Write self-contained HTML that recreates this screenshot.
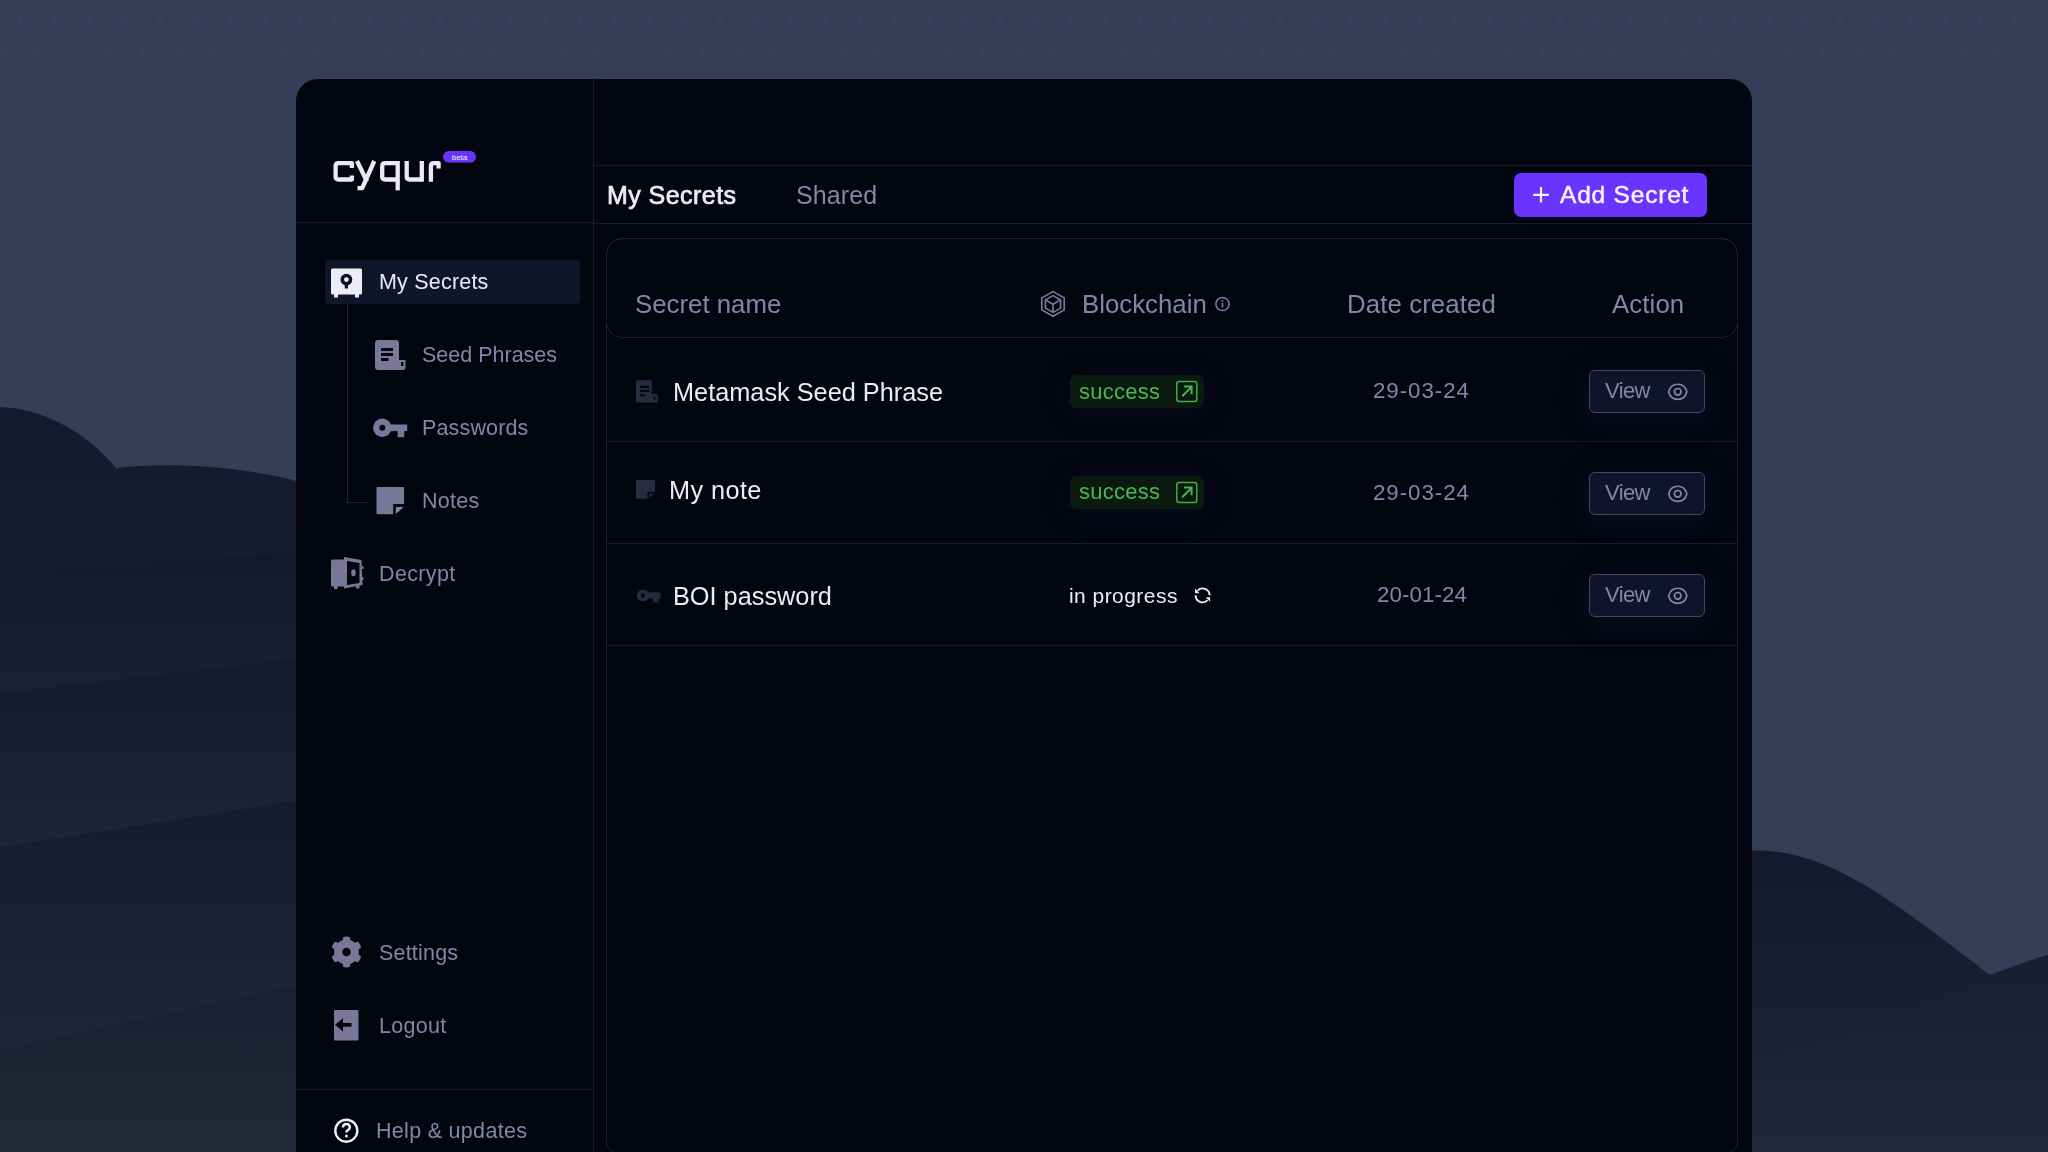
<!DOCTYPE html>
<html><head><meta charset="utf-8">
<style>
*{margin:0;padding:0;box-sizing:border-box}
html,body{width:2048px;height:1152px;overflow:hidden}
body{position:relative;background:#353e56;font-family:"Liberation Sans",sans-serif}
.abs{position:absolute}
.t{position:absolute;white-space:nowrap;line-height:1;will-change:transform}
#panel{position:absolute;left:296px;top:79px;width:1456px;height:1100px;background:#03060f;border-radius:22px 22px 0 0}
.hl{position:absolute;height:1px;background:#171b2e}
.vl{position:absolute;width:1px;background:#171b2e}
.lav{color:#8685a7}
.wh{color:#ecebf7}
</style></head>
<body>
<svg class="abs" style="left:0;top:0" width="2048" height="1152" viewBox="0 0 2048 1152">
  <defs>
    <pattern id="dots" x="0" y="0" width="35" height="67" patternUnits="userSpaceOnUse">
      <circle cx="20" cy="19" r="3" fill="#3e3f68"/>
      <circle cx="37.5" cy="52.5" r="3" fill="#3e3f68"/>
      <circle cx="2.5" cy="52.5" r="3" fill="#3e3f68"/>
    </pattern>
    <linearGradient id="dotfade" x1="0" y1="0" x2="0" y2="1">
      <stop offset="0" stop-color="#fff" stop-opacity="0.75"/>
      <stop offset="0.3" stop-color="#fff" stop-opacity="0.45"/>
      <stop offset="0.65" stop-color="#fff" stop-opacity="0.2"/>
      <stop offset="1" stop-color="#fff" stop-opacity="0"/>
    </linearGradient>
    <mask id="dm"><rect x="0" y="0" width="2048" height="240" fill="url(#dotfade)"/></mask>
    <linearGradient id="gA" gradientUnits="userSpaceOnUse" x1="0" y1="407" x2="0" y2="574">
      <stop offset="0" stop-color="#121a2d"/><stop offset="1" stop-color="#161d30"/>
    </linearGradient>
    <linearGradient id="gB" gradientUnits="userSpaceOnUse" x1="0" y1="555" x2="0" y2="693">
      <stop offset="0" stop-color="#131a2d"/><stop offset="1" stop-color="#1a2133"/>
    </linearGradient>
    <linearGradient id="gC" gradientUnits="userSpaceOnUse" x1="0" y1="660" x2="0" y2="847">
      <stop offset="0" stop-color="#141b2d"/><stop offset="1" stop-color="#1e2536"/>
    </linearGradient>
    <linearGradient id="gD" gradientUnits="userSpaceOnUse" x1="0" y1="800" x2="0" y2="1050">
      <stop offset="0" stop-color="#151c2e"/><stop offset="1" stop-color="#1f2637"/>
    </linearGradient>
    <linearGradient id="gE" gradientUnits="userSpaceOnUse" x1="0" y1="985" x2="0" y2="1152">
      <stop offset="0" stop-color="#192031"/><stop offset="1" stop-color="#222938"/>
    </linearGradient>
    <linearGradient id="gR1" gradientUnits="userSpaceOnUse" x1="0" y1="851" x2="0" y2="1064">
      <stop offset="0" stop-color="#131a2d"/><stop offset="1" stop-color="#1b2234"/>
    </linearGradient>
    <linearGradient id="gR2" gradientUnits="userSpaceOnUse" x1="0" y1="960" x2="0" y2="1152">
      <stop offset="0" stop-color="#181f31"/><stop offset="1" stop-color="#21283a"/>
    </linearGradient>
  </defs>
  <rect x="0" y="0" width="2048" height="240" fill="url(#dots)" mask="url(#dm)"/>
  <!-- left hills -->
  <path d="M0 407 C40 408 85 430 116 468 C170 462 240 466 300 482 L300 1152 L0 1152 Z" fill="url(#gA)"/>
  <path d="M0 574 C100 566 200 558 300 553 L300 1152 L0 1152Z" fill="url(#gB)"/>
  <path d="M0 693 C100 682 200 670 300 659 L300 1152 L0 1152Z" fill="url(#gC)"/>
  <path d="M0 847 C100 832 200 816 300 800 L300 1152 L0 1152Z" fill="url(#gD)"/>
  <path d="M0 1050 C100 1028 200 1006 300 985 L300 1152 L0 1152Z" fill="url(#gE)"/>
  <!-- right hills -->
  <path d="M1740 851 C1800 846 1850 872 1910 915 C1945 940 1970 960 1990 975 C2010 968 2030 960 2048 955 L2048 1152 L1740 1152Z" fill="url(#gR1)"/>
  <path d="M1740 1064 C1830 1040 1920 1010 1990 975 C2010 968 2030 960 2048 955 L2048 1152 L1740 1152Z" fill="url(#gR2)"/>
</svg>
<div id="panel"></div>
<!-- structure lines -->
<div class="vl" style="left:593px;top:79px;height:1073px"></div>
<div class="hl" style="left:296px;top:222px;width:297px"></div>
<div class="hl" style="left:594px;top:165px;width:1158px"></div>
<div class="hl" style="left:594px;top:223px;width:1158px"></div>
<div class="hl" style="left:296px;top:1089px;width:297px"></div>

<!-- logo -->
<svg class="abs" style="left:0;top:0" width="600" height="230" viewBox="0 0 600 230">
 <g fill="none" stroke="#eceaf6" stroke-width="4.3" stroke-linejoin="round">
  <path d="M351.9 168 L351.9 163.2 L338.6 163.2 Q335.6 163.2 335.6 166.2 L335.6 176.5 Q335.6 179.5 338.6 179.5 L351.9 179.5 L351.9 175.6"/>
  <path d="M357 161 L367 181.5"/>
  <path d="M374.3 161 L362.2 188.1 L357.5 188.1"/>
  <path d="M397.7 161 L397.7 190.4"/>
  <path d="M397.7 163.2 L385.2 163.2 Q382.2 163.2 382.2 166.2 L382.2 176.5 Q382.2 179.5 385.2 179.5 L397.7 179.5"/>
  <path d="M406.7 161 L406.7 176.5 Q406.7 179.5 409.7 179.5 L421.8 179.5"/>
  <path d="M421.8 161 L421.8 181.7"/>
  <path d="M430.9 181.7 L430.9 166.2 Q430.9 163.2 433.9 163.2 L438.6 163.2 L438.6 168.5"/>
 </g>
 <rect x="443" y="151" width="33" height="11.6" rx="5.8" fill="#6934fe"/>
 <text x="459.5" y="159.8" text-anchor="middle" font-family="Liberation Sans" font-size="8" fill="#f2eefe">beta</text>
</svg>
<!-- nav active -->
<div class="abs" style="left:325px;top:260px;width:255px;height:44px;background:#10162a;border-radius:4px"></div>
<svg class="abs" style="left:325px;top:262px" width="45" height="40" viewBox="0 0 45 40">
  <rect x="6" y="6.5" width="31" height="26" rx="1.5" fill="#eeedf7"/>
  <rect x="9" y="31" width="4" height="4.5" fill="#eeedf7"/>
  <rect x="30" y="31" width="4" height="4.5" fill="#eeedf7"/>
  <circle cx="21.4" cy="17.6" r="5.9" fill="#0b1022"/>
  <circle cx="21.4" cy="17.6" r="2.4" fill="#eeedf7"/>
  <rect x="19.8" y="20" width="3.2" height="6.5" fill="#0b1022"/>
</svg>

<!-- tree line -->
<div class="abs" style="left:347px;top:304px;width:1px;height:198px;background:#1e2238"></div>
<div class="abs" style="left:347px;top:502px;width:20px;height:1px;background:#1e2238"></div>

<!-- seed phrases -->
<svg class="abs" style="left:370px;top:335px" width="40" height="40" viewBox="0 0 40 40">
  <path d="M8 5 L26 5 Q29 5 29 8 L29 25 L35.5 25 L35.5 32 Q35.5 35 32.5 35 L8 35 Q5 35 5 32 L5 8 Q5 5 8 5Z" fill="#7a7799"/>
  <rect x="11" y="13" width="12" height="3" fill="#03060f"/>
  <rect x="11" y="18" width="12" height="3" fill="#03060f"/>
  <rect x="11" y="23" width="7.5" height="3" fill="#03060f"/>
  <rect x="31" y="27" width="2.5" height="4" fill="#03060f"/>
</svg>

<!-- passwords -->
<svg class="abs" style="left:370px;top:408px" width="40" height="40" viewBox="0 0 40 40">
  <circle cx="12.3" cy="19.7" r="9.2" fill="#7a7799"/>
  <circle cx="12.3" cy="19.7" r="3" fill="#03060f"/>
  <rect x="18" y="16.5" width="19.2" height="6.6" fill="#7a7799"/>
  <rect x="27.6" y="20" width="6.6" height="9.2" fill="#7a7799"/>
</svg>

<!-- notes -->
<svg class="abs" style="left:370px;top:482px" width="40" height="40" viewBox="0 0 40 40">
  <path d="M6.5 6 Q6.5 4.9 7.6 4.9 L33 4.9 Q34.1 4.9 34.1 6 L34.1 22 L23.2 22 L23.2 32.2 L7.6 32.2 Q6.5 32.2 6.5 31.1 Z" fill="#7a7799"/>
  <path d="M25.8 25.1 L33.6 25.1 L25.8 32.1Z" fill="#84859f"/>
</svg>
<!-- decrypt -->
<svg class="abs" style="left:326px;top:553px" width="42" height="40" viewBox="0 0 42 40">
  <rect x="5" y="6.5" width="14" height="27" rx="1.5" fill="#7a7799"/>
  <rect x="8" y="33" width="3.5" height="3" fill="#7a7799"/>
  <rect x="30" y="32" width="3.5" height="3.5" fill="#7a7799"/>
  <path d="M18 4 L35.5 7 L36.5 32 L18 35.5Z" fill="#7a7799"/>
  <path d="M21 8 L33.5 10 L33.5 30 L21 32Z" fill="#03060f"/>
  <ellipse cx="27.5" cy="19.7" rx="2.3" ry="3.5" fill="#7a7799"/>
  <rect x="36" y="13" width="1.5" height="3" fill="#7a7799"/>
  <rect x="36" y="24" width="1.5" height="3" fill="#7a7799"/>
</svg>

<!-- settings -->
<svg class="abs" style="left:326px;top:932px" width="42" height="42" viewBox="0 0 42 42">
  <path fill="#7a7799" d="M32.90 20.00 L32.90 20.22 L32.89 20.43 L32.88 20.65 L32.87 20.86 L32.85 21.08 L32.83 21.30 L32.81 21.51 L32.78 21.73 L32.75 21.94 L32.71 22.15 L32.69 22.37 L32.82 22.62 L33.10 22.91 L33.49 23.24 L33.93 23.60 L34.35 23.97 L34.72 24.35 L34.96 24.70 L35.04 25.01 L34.97 25.27 L34.88 25.52 L34.78 25.77 L34.68 26.02 L34.57 26.26 L34.46 26.51 L34.34 26.75 L34.22 26.99 L34.10 27.23 L33.97 27.47 L33.84 27.70 L33.70 27.93 L33.56 28.16 L33.42 28.39 L33.27 28.61 L33.11 28.83 L32.96 29.05 L32.80 29.27 L32.64 29.48 L32.47 29.69 L32.30 29.90 L32.11 30.09 L31.80 30.17 L31.37 30.14 L30.87 30.01 L30.33 29.83 L29.80 29.63 L29.32 29.46 L28.93 29.36 L28.65 29.37 L28.47 29.50 L28.30 29.64 L28.13 29.77 L27.96 29.90 L27.79 30.03 L27.61 30.16 L27.43 30.28 L27.25 30.40 L27.07 30.52 L26.89 30.63 L26.70 30.74 L26.51 30.85 L26.32 30.95 L26.13 31.05 L25.94 31.15 L25.74 31.24 L25.54 31.33 L25.35 31.41 L25.15 31.50 L24.94 31.58 L24.74 31.65 L24.54 31.74 L24.39 31.98 L24.28 32.37 L24.19 32.87 L24.10 33.43 L23.99 33.99 L23.84 34.48 L23.66 34.87 L23.43 35.10 L23.17 35.17 L22.91 35.21 L22.64 35.25 L22.38 35.29 L22.11 35.32 L21.84 35.34 L21.57 35.36 L21.31 35.38 L21.04 35.39 L20.77 35.40 L20.50 35.40 L20.23 35.40 L19.96 35.39 L19.69 35.38 L19.43 35.36 L19.16 35.34 L18.89 35.32 L18.62 35.29 L18.36 35.25 L18.09 35.21 L17.83 35.17 L17.57 35.10 L17.34 34.87 L17.16 34.48 L17.01 33.99 L16.90 33.43 L16.81 32.87 L16.72 32.37 L16.61 31.98 L16.46 31.74 L16.26 31.65 L16.06 31.58 L15.85 31.50 L15.65 31.41 L15.46 31.33 L15.26 31.24 L15.06 31.15 L14.87 31.05 L14.68 30.95 L14.49 30.85 L14.30 30.74 L14.11 30.63 L13.93 30.52 L13.75 30.40 L13.57 30.28 L13.39 30.16 L13.21 30.03 L13.04 29.90 L12.87 29.77 L12.70 29.64 L12.53 29.50 L12.35 29.37 L12.07 29.36 L11.68 29.46 L11.20 29.63 L10.67 29.83 L10.13 30.01 L9.63 30.14 L9.20 30.17 L8.89 30.09 L8.70 29.90 L8.53 29.69 L8.36 29.48 L8.20 29.27 L8.04 29.05 L7.89 28.83 L7.73 28.61 L7.58 28.39 L7.44 28.16 L7.30 27.93 L7.16 27.70 L7.03 27.47 L6.90 27.23 L6.78 26.99 L6.66 26.75 L6.54 26.51 L6.43 26.26 L6.32 26.02 L6.22 25.77 L6.12 25.52 L6.03 25.27 L5.96 25.01 L6.04 24.70 L6.28 24.35 L6.65 23.97 L7.07 23.60 L7.51 23.24 L7.90 22.91 L8.18 22.62 L8.31 22.37 L8.29 22.15 L8.25 21.94 L8.22 21.73 L8.19 21.51 L8.17 21.30 L8.15 21.08 L8.13 20.86 L8.12 20.65 L8.11 20.43 L8.10 20.22 L8.10 20.00 L8.10 19.78 L8.11 19.57 L8.12 19.35 L8.13 19.14 L8.15 18.92 L8.17 18.70 L8.19 18.49 L8.22 18.27 L8.25 18.06 L8.29 17.85 L8.31 17.63 L8.18 17.38 L7.90 17.09 L7.51 16.76 L7.07 16.40 L6.65 16.03 L6.28 15.65 L6.04 15.30 L5.96 14.99 L6.03 14.73 L6.12 14.48 L6.22 14.23 L6.32 13.98 L6.43 13.74 L6.54 13.49 L6.66 13.25 L6.78 13.01 L6.90 12.77 L7.03 12.53 L7.16 12.30 L7.30 12.07 L7.44 11.84 L7.58 11.61 L7.73 11.39 L7.89 11.17 L8.04 10.95 L8.20 10.73 L8.36 10.52 L8.53 10.31 L8.70 10.10 L8.89 9.91 L9.20 9.83 L9.63 9.86 L10.13 9.99 L10.67 10.17 L11.20 10.37 L11.68 10.54 L12.07 10.64 L12.35 10.63 L12.53 10.50 L12.70 10.36 L12.87 10.23 L13.04 10.10 L13.21 9.97 L13.39 9.84 L13.57 9.72 L13.75 9.60 L13.93 9.48 L14.11 9.37 L14.30 9.26 L14.49 9.15 L14.68 9.05 L14.87 8.95 L15.06 8.85 L15.26 8.76 L15.46 8.67 L15.65 8.59 L15.85 8.50 L16.06 8.42 L16.26 8.35 L16.46 8.26 L16.61 8.02 L16.72 7.63 L16.81 7.13 L16.90 6.57 L17.01 6.01 L17.16 5.52 L17.34 5.13 L17.57 4.90 L17.83 4.83 L18.09 4.79 L18.36 4.75 L18.62 4.71 L18.89 4.68 L19.16 4.66 L19.43 4.64 L19.69 4.62 L19.96 4.61 L20.23 4.60 L20.50 4.60 L20.77 4.60 L21.04 4.61 L21.31 4.62 L21.57 4.64 L21.84 4.66 L22.11 4.68 L22.38 4.71 L22.64 4.75 L22.91 4.79 L23.17 4.83 L23.43 4.90 L23.66 5.13 L23.84 5.52 L23.99 6.01 L24.10 6.57 L24.19 7.13 L24.28 7.63 L24.39 8.02 L24.54 8.26 L24.74 8.35 L24.94 8.42 L25.15 8.50 L25.35 8.59 L25.54 8.67 L25.74 8.76 L25.94 8.85 L26.13 8.95 L26.32 9.05 L26.51 9.15 L26.70 9.26 L26.89 9.37 L27.07 9.48 L27.25 9.60 L27.43 9.72 L27.61 9.84 L27.79 9.97 L27.96 10.10 L28.13 10.23 L28.30 10.36 L28.47 10.50 L28.65 10.63 L28.93 10.64 L29.32 10.54 L29.80 10.37 L30.33 10.17 L30.87 9.99 L31.37 9.86 L31.80 9.83 L32.11 9.91 L32.30 10.10 L32.47 10.31 L32.64 10.52 L32.80 10.73 L32.96 10.95 L33.11 11.17 L33.27 11.39 L33.42 11.61 L33.56 11.84 L33.70 12.07 L33.84 12.30 L33.97 12.53 L34.10 12.77 L34.22 13.01 L34.34 13.25 L34.46 13.49 L34.57 13.74 L34.68 13.98 L34.78 14.23 L34.88 14.48 L34.97 14.73 L35.04 14.99 L34.96 15.30 L34.72 15.65 L34.35 16.03 L33.93 16.40 L33.49 16.76 L33.10 17.09 L32.82 17.38 L32.69 17.63 L32.71 17.85 L32.75 18.06 L32.78 18.27 L32.81 18.49 L32.83 18.70 L32.85 18.92 L32.87 19.14 L32.88 19.35 L32.89 19.57 L32.90 19.78Z"/>
  <circle cx="20.5" cy="20" r="4.3" fill="#03060f"/>
</svg>
<!-- logout -->
<svg class="abs" style="left:326px;top:1005px" width="42" height="42" viewBox="0 0 42 42">
  <rect x="8" y="5" width="24.5" height="30.5" rx="1" fill="#7a7799"/>
  <path d="M9 19.8 L17 13.2 L17 18.1 L25.5 18.1 L25.5 21.7 L17 21.7 L17 26.4Z" fill="#03060f"/>
</svg>
<!-- help -->
<svg class="abs" style="left:326px;top:1110px" width="42" height="42" viewBox="0 0 42 42">
  <circle cx="20.3" cy="20.7" r="11" fill="none" stroke="#f0eff8" stroke-width="2.4"/>
  <path d="M17 17.5 Q17 14 20.4 14 Q23.8 14 23.8 17.3 Q23.8 19.3 21.5 20.3 Q20.4 20.8 20.4 22.5" fill="none" stroke="#f0eff8" stroke-width="2.4"/>
  <circle cx="20.4" cy="26" r="1.5" fill="#f0eff8"/>
</svg>


<div class="t wh" style="left:379px;top:272.43px;font-size:21.5px;letter-spacing:0.2px">My Secrets</div>
<div class="t lav" style="left:421.7px;top:345.23px;font-size:21.5px">Seed Phrases</div>
<div class="t lav" style="left:421.7px;top:418.23px;font-size:21.5px;letter-spacing:0.15px">Passwords</div>
<div class="t lav" style="left:421.7px;top:490.73px;font-size:21.5px;letter-spacing:0.3px">Notes</div>
<div class="t lav" style="left:379px;top:563.73px;font-size:21.5px;letter-spacing:0.35px">Decrypt</div>
<div class="t lav" style="left:379px;top:942.93px;font-size:21.5px;letter-spacing:0.2px">Settings</div>
<div class="t lav" style="left:379px;top:1015.52px;font-size:21.5px;letter-spacing:0.3px">Logout</div>
<div class="t lav" style="left:376px;top:1120.92px;font-size:21.5px;letter-spacing:0.3px">Help &amp; updates</div>
<div class="t wh" style="left:606.5px;top:182.95px;font-size:25px;letter-spacing:0.45px;-webkit-text-stroke:0.7px #ecebf7">My Secrets</div>
<div class="t lav" style="left:796px;top:182.95px;font-size:25px;letter-spacing:0.1px">Shared</div>
<!-- add secret -->
<div class="abs" style="left:1514px;top:173px;width:193px;height:44px;background:#6934fe;border-radius:7px;box-shadow:0 0 10px rgba(105,52,254,0.08)"></div>
<svg class="abs" style="left:1530px;top:184px" width="22" height="22" viewBox="0 0 22 22">
  <path d="M11 3 L11 18.6 M3.2 10.8 L18.8 10.8" stroke="#f5f0ff" stroke-width="2.2"/>
</svg>

<!-- table container -->
<div class="abs" style="left:606px;top:238px;width:1132px;height:918px;border:1px solid #1a1e32;border-radius:16px"></div>
<div class="abs" style="left:606px;top:238px;width:1132px;height:100px;border:1px solid #1a1e32;border-radius:16px"></div>
<div class="hl" style="left:607px;top:441px;width:1130px;background:#161a2d"></div>
<div class="hl" style="left:607px;top:543px;width:1130px;background:#161a2d"></div>
<div class="hl" style="left:607px;top:645px;width:1130px;background:#161a2d"></div>

<div class="t" style="left:1560px;top:182.7px;font-size:24.5px;color:#f7f2ff;letter-spacing:0.8px;-webkit-text-stroke:0.5px #f7f2ff">Add Secret</div>
<!-- header -->
<svg class="abs" style="left:1036px;top:286px" width="34" height="36" viewBox="0 0 34 36">
  <g fill="none" stroke="#7d7b9f" stroke-width="1.6" stroke-linejoin="round">
   <path d="M17 5.6 L28.2 11.9 L28.2 23.9 L17 30.2 L5.8 23.9 L5.8 11.9Z"/>
   <path d="M17 9.6 L24.6 13.9 L24.6 22.1 L17 26.4 L9.4 22.1 L9.4 13.9Z"/>
   <path d="M9.4 13.9 L17 18.2 L24.6 13.9 M17 18.2 L17 26.4"/>
  </g>
</svg>
<svg class="abs" style="left:1212px;top:294px" width="20" height="20" viewBox="0 0 20 20">
  <circle cx="10.5" cy="10" r="6.6" fill="none" stroke="#7d7b9f" stroke-width="1.5"/>
  <rect x="9.7" y="8.8" width="1.6" height="4.6" fill="#7d7b9f"/>
  <circle cx="10.5" cy="6.8" r="0.95" fill="#7d7b9f"/>
</svg>
<div class="t lav" style="left:635px;top:292.07px;font-size:25.8px">Secret name</div>
<div class="t lav" style="left:1082px;top:292.07px;font-size:25.8px">Blockchain</div>
<div class="t lav" style="left:1347px;top:292.07px;font-size:25.8px;letter-spacing:0.1px">Date created</div>
<div class="t lav" style="left:1611.5px;top:292.07px;font-size:25.8px;letter-spacing:0.1px">Action</div>
<div class="t wh" style="left:672.5px;top:379.69px;font-size:25.3px">Metamask Seed Phrase</div>
<svg class="abs" style="left:628px;top:372px" width="40" height="40" viewBox="0 0 40 40">
  <path d="M9.8 8.2 L22.5 8.2 Q23.8 8.2 23.8 9.5 L23.8 22 L29.9 22 L29.9 29 Q29.9 30.6 28.3 30.6 L9.8 30.6 Q8 30.6 8 29 L8 9.8 Q8 8.2 9.8 8.2Z" fill="#282b40"/>
  <rect x="12" y="13.9" width="9.5" height="2" fill="#03060f"/><rect x="12" y="17.9" width="9.5" height="2" fill="#03060f"/><rect x="12" y="22.3" width="5.5" height="2" fill="#03060f"/>
  <rect x="25.7" y="24.5" width="1.6" height="3" fill="#03060f"/>
</svg>
<div class="abs" style="left:1070px;top:375.2px;width:133.5px;height:32.5px;background:#0b1a0e;border-radius:6px;box-shadow:0 4px 26px 6px rgba(70,70,150,0.07)"></div>
<div class="t " style="left:1078.5px;top:381.10px;font-size:22px;letter-spacing:0.25px;color:#4cb653">success</div>
<svg class="abs" style="left:1174px;top:378.7px" width="26" height="26" viewBox="0 0 26 26">
  <rect x="2.8" y="2.4" width="20" height="20.2" rx="2.5" fill="none" stroke="#46a84c" stroke-width="1.5"/>
  <path d="M8.2 17.2 L17.3 8.1 M10 7.6 L17.6 7.6 L17.6 15.2" fill="none" stroke="#4cb653" stroke-width="2"/>
</svg>
<div class="t lav" style="left:1373px;top:379.94px;font-size:22.3px;letter-spacing:0.95px">29-03-24</div>
<div class="abs" style="left:1588.5px;top:369.5px;width:116.5px;height:43.5px;background:#10142a;border:1.5px solid #44475f;border-radius:6px;box-shadow:0 6px 28px 6px rgba(70,70,150,0.10)"></div>
<div class="t lav" style="left:1605px;top:380.10px;font-size:22px;letter-spacing:-0.6px">View</div>
<svg class="abs" style="left:1666px;top:379.5px" width="24" height="24" viewBox="0 0 24 24">
  <path d="M2.65 11.8 C5.2 1.7 18.3 1.7 20.85 11.8 C18.3 21.9 5.2 21.9 2.65 11.8Z" fill="none" stroke="#8886a9" stroke-width="1.7"/>
  <circle cx="11.75" cy="11.8" r="3.3" fill="none" stroke="#8886a9" stroke-width="1.7"/>
</svg>
<div class="t wh" style="left:669px;top:478.00px;font-size:25.3px;letter-spacing:0.4px">My note</div>
<svg class="abs" style="left:628px;top:470px" width="40" height="40" viewBox="0 0 40 40">
  <path d="M8 10 L27 10 L27 22 L19.5 22 L19.5 28.8 L8 28.8Z" fill="#282b40"/>
  <path d="M21 23.5 L26.5 23.5 L21 28.5Z" fill="#1e2133"/>
</svg>
<div class="abs" style="left:1070px;top:476px;width:133.5px;height:32.5px;background:#0b1a0e;border-radius:6px;box-shadow:0 4px 26px 6px rgba(70,70,150,0.07)"></div>
<div class="t " style="left:1078.5px;top:480.80px;font-size:22px;letter-spacing:0.25px;color:#4cb653">success</div>
<svg class="abs" style="left:1174px;top:479.5px" width="26" height="26" viewBox="0 0 26 26">
  <rect x="2.8" y="2.4" width="20" height="20.2" rx="2.5" fill="none" stroke="#46a84c" stroke-width="1.5"/>
  <path d="M8.2 17.2 L17.3 8.1 M10 7.6 L17.6 7.6 L17.6 15.2" fill="none" stroke="#4cb653" stroke-width="2"/>
</svg>
<div class="t lav" style="left:1373px;top:482.25px;font-size:22.3px;letter-spacing:0.95px">29-03-24</div>
<div class="abs" style="left:1588.5px;top:471.7px;width:116.5px;height:43.5px;background:#10142a;border:1.5px solid #44475f;border-radius:6px;box-shadow:0 6px 28px 6px rgba(70,70,150,0.10)"></div>
<div class="t lav" style="left:1605px;top:482.30px;font-size:22px;letter-spacing:-0.6px">View</div>
<svg class="abs" style="left:1666px;top:481.7px" width="24" height="24" viewBox="0 0 24 24">
  <path d="M2.65 11.8 C5.2 1.7 18.3 1.7 20.85 11.8 C18.3 21.9 5.2 21.9 2.65 11.8Z" fill="none" stroke="#8886a9" stroke-width="1.7"/>
  <circle cx="11.75" cy="11.8" r="3.3" fill="none" stroke="#8886a9" stroke-width="1.7"/>
</svg>
<div class="t wh" style="left:672.5px;top:584.10px;font-size:25.3px">BOI password</div>
<svg class="abs" style="left:628px;top:575px" width="40" height="40" viewBox="0 0 40 40">
  <circle cx="14.9" cy="20.5" r="4.1" fill="none" stroke="#282b40" stroke-width="3.8"/>
  <rect x="19.5" y="17.4" width="13" height="6.2" fill="#282b40"/><rect x="25" y="20" width="5.6" height="7.4" fill="#282b40"/>
</svg>
<div class="t wh" style="left:1069px;top:584.95px;font-size:21px;letter-spacing:0.45px">in progress</div>
<svg class="abs" style="left:1191px;top:584.3px" width="24" height="24" viewBox="0 0 24 24">
  <g fill="none" stroke="#ecebf7" stroke-width="1.9">
   <path d="M6.6 6.6 A7 7 0 0 1 18.6 11.3"/>
   <path d="M4.6 11.3 A7 7 0 0 0 16.6 16.2"/>
  </g>
  <path d="M4.0 4.6 L4.0 9.2 L8.6 9.2Z" fill="#ecebf7"/>
  <path d="M14.6 13.3 L19.1 13.3 L19.1 17.8Z" fill="#ecebf7"/>
</svg>
<div class="t lav" style="left:1377px;top:583.94px;font-size:22.3px;letter-spacing:0.1px">20-01-24</div>
<div class="abs" style="left:1588.5px;top:573.7px;width:116.5px;height:43.5px;background:#10142a;border:1.5px solid #44475f;border-radius:6px;box-shadow:0 6px 28px 6px rgba(70,70,150,0.10)"></div>
<div class="t lav" style="left:1605px;top:584.30px;font-size:22px;letter-spacing:-0.6px">View</div>
<svg class="abs" style="left:1666px;top:583.7px" width="24" height="24" viewBox="0 0 24 24">
  <path d="M2.65 11.8 C5.2 1.7 18.3 1.7 20.85 11.8 C18.3 21.9 5.2 21.9 2.65 11.8Z" fill="none" stroke="#8886a9" stroke-width="1.7"/>
  <circle cx="11.75" cy="11.8" r="3.3" fill="none" stroke="#8886a9" stroke-width="1.7"/>
</svg>
</body></html>
